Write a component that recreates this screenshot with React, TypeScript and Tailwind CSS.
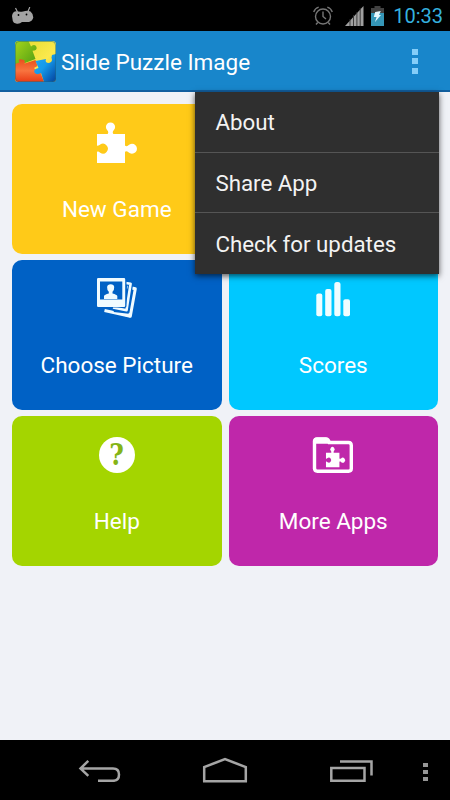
import type { ReactNode } from 'react';

interface TileProps {
  label: string;
  color: string;
  children: ReactNode;
}

const PUZZLE_PATH =
  'M1 12H11.6C12.6 11 12.4 9.600 11.300 8.300A4.600 4.600 0 1 1 17.700 8.300C16.600 9.600 16.400 11 17.400 12H29V23.600C30 24.500 31.300 24.200 32.400 23.200A5 5 0 1 1 32.400 30.200C31.300 29.200 30 28.900 29 29.800V41H1V30C2 29 3 30 4.200 30.800A4.900 4.900 0 1 0 4.200 22.600C3 23.400 2 24.400 1 23.400Z';

const PuzzleIcon = () => (
  <svg className="h-[42px] w-[42px]" viewBox="0 0 42 42" fill="#fff">
    <path d={PUZZLE_PATH} />
  </svg>
);

const PhotosIcon = () => (
  <svg className="h-[42px] w-[42px]" viewBox="0 0 42 42" fill="none">
    <path
      d="M31 9L39.300 10.800L34.300 38.300L8.500 32.500"
      stroke="#f0fbff"
      strokeWidth="3"
      strokeLinejoin="round"
    />
    <path d="M8 32L34.500 35L34.200 39.600Z" fill="#f0fbff" />
    <path d="M29.500 4.500L34.700 5.500L30.500 33L18 31.500" stroke="#0061c5" strokeWidth="5" />
    <path d="M29.500 5L34.600 5.700L30.500 32.200L17 29.500" stroke="#f0fbff" strokeWidth="2.600" strokeLinejoin="round" />
    <rect x=".300" y="-.500" width="30.200" height="30" rx="1.500" fill="#0061c5" />
    <path
      fillRule="evenodd"
      fill="#f0fbff"
      d="M2.200 0H28Q29.200 0 29.200 1.200V27.800Q29.200 29 28 29H2.200Q1 29 1 27.800V1.200Q1 0 2.200 0ZM4 3.500V21.500H26.300V3.500Z"
    />
    <path
      fill="#f0fbff"
      d="M8 21V18Q8.500 16.400 12.800 15.400V13.800Q10.900 11.800 11.100 9Q11.500 6.200 14.700 6.200Q17.900 6.200 18.200 9Q18.400 11.800 16.500 13.800V15.400Q20.800 16.400 21.300 18V21Z"
    />
  </svg>
);

const ScoresIcon = () => (
  <svg className="h-[42px] w-[42px]" viewBox="0 0 42 42" fill="#f0fdff">
    <rect x="4.300" y="15.500" width="6" height="22.800" rx="2" />
    <rect x="13.200" y="11" width="6.300" height="27.300" rx="2" />
    <rect x="22.300" y="4" width="6.200" height="34.300" rx="2.500" />
    <rect x="31.300" y="21.300" width="6.700" height="17" rx="2" />
  </svg>
);

const HelpIcon = () => (
  <div className="flex h-[42px] w-[42px] items-center justify-center">
    <div className="flex h-9 w-9 items-center justify-center rounded-full bg-white font-['DejaVu_Serif',serif] text-[29px] leading-9 font-bold text-[#84b416]">
      <span className="scale-x-[.860]">?</span>
    </div>
  </div>
);

const FolderIcon = () => (
  <svg className="h-[42px] w-[42px]" viewBox="0 0 42 42">
    <path
      d="M2.500 35V7Q2.500 5 5 5H14Q16.400 5 17.300 8.500H36.500Q39.300 8.500 39.300 11.500V34.500Q39.300 37.200 36.500 37.200H5.500Q2.500 37.200 2.500 34Z"
      fill="none"
      stroke="#fff"
      strokeWidth="3.400"
    />
    <path d="M2 4.500Q3 3.500 5 3.500H14Q17 4 17.500 9.700H2Z" fill="#fff" />
    <path d={PUZZLE_PATH} fill="#fff" transform="translate(13.500 12.800) scale(.480 .500)" />
  </svg>
);

const AppLogo = () => (
  <svg className="mt-px h-[41px] w-[41px]" viewBox="0 0 41 41">
    <defs>
      <linearGradient id="green" x1="0" y1="0" x2="1" y2="1">
        <stop stopColor="#a5d51b" />
        <stop offset="1" stopColor="#4b9b13" />
      </linearGradient>
      <linearGradient id="yellow" x1="0" y1="0" x2="1" y2="1">
        <stop stopColor="#e2da2c" />
        <stop offset=".600" stopColor="#fbe94e" />
        <stop offset="1" stopColor="#e9b60e" />
      </linearGradient>
      <linearGradient id="red" x1="0" y1="0" x2="0" y2="1">
        <stop stopColor="#e8501c" />
        <stop offset=".500" stopColor="#f8743f" />
        <stop offset="1" stopColor="#e93b14" />
      </linearGradient>
      <linearGradient id="blue" x1="0" y1="0" x2="1" y2="1">
        <stop stopColor="#24a5f2" />
        <stop offset=".450" stopColor="#149bec" />
        <stop offset="1" stopColor="#043f9b" />
      </linearGradient>
      <clipPath id="logo">
        <rect width="41" height="41" rx="3.500" />
      </clipPath>
    </defs>
    <g clipPath="url(#logo)">
      <rect width="41" height="41" fill="url(#yellow)" />
      <path
        d="M0 0H13.500L16 5.500Q20 2.500 21.500 6Q22.500 9.500 17.500 9.800L20.500 18L10 22L0 26Z"
        fill="url(#green)"
      />
      <path
        d="M0 23L4.500 21.500Q2.500 17.500 6.500 18.500Q11 18.500 9.500 22.500L20.500 19L22.500 25L19 27Q21 30 24.500 29L29 41H0Z"
        fill="url(#red)"
      />
      <path
        d="M20.500 20L31 18Q29.500 22 34 22Q38 21 36.500 16.500L37 14L41 13V41H29L26 32Q21.500 34.500 19.500 31.500Q18 28 23.500 27Z"
        fill="url(#blue)"
      />
      <rect x=".500" y=".500" width="40" height="40" rx="3.500" fill="none" stroke="#1c6b84" strokeOpacity=".500" />
    </g>
  </svg>
);

const Tile = ({ label, color, children }: TileProps) => (
  <div className={`flex flex-col items-center rounded-[10px] pt-[18px] text-white ${color}`}>
    {children}
    <p className="mt-8 text-[22.500px] leading-[26px]">{label}</p>
  </div>
);

const StatusBar = () => (
  <div className="flex h-[31px] items-center bg-black pr-[7px] pl-3">
    <svg className="h-[18px] w-[22px]" viewBox="0 0 22 18">
      <path d="M3.500 1L5.500 5M17.800 0L16 4.500" stroke="#a3a3a3" strokeWidth="1.200" />
      <path
        d="M0 9Q.500 4.500 4.500 4.300Q8 5 11 4.500Q15.500 3 18.500 4.500Q21.500 7 21.300 10.500Q20.500 14 17 15H10Q7.500 17.300 4 16.500Q1.500 16 .800 14Z"
        fill="#a3a3a3"
      />
      <circle cx="6.500" cy="8" r=".900" fill="#000" />
      <circle cx="14.500" cy="7.500" r=".900" fill="#000" />
    </svg>
    <div className="ml-auto flex items-center">
      <svg className="h-5 w-5" viewBox="0 0 20 20" fill="none" stroke="#767676" strokeWidth="1.400">
        <circle cx="10" cy="10.500" r="7.500" />
        <path d="M10 5.500V10.500L13 13M.700 6Q2 2.300 5.700 1.200M14.300 1.200Q18 2.300 19.300 6M4.700 16.500L3 18.500M15.300 16.500L17 18.500" />
      </svg>
      <svg className="ml-3 h-[22px] w-[19px]" viewBox="0 0 19 22">
        <path d="M0 21L18.500 1V21Z" fill="#a0a0a0" />
        <path d="M5 14V21M8.500 10V21M11.900 7V21M15.200 3V21" stroke="#333" strokeWidth=".900" />
      </svg>
      <svg className="ml-[7px] h-5 w-[13px]" viewBox="0 0 13 20">
        <path d="M3.500 0H9.500V2H13V8H0V2H3.500Z" fill="#424242" />
        <path d="M0 7H13V20H0Z" fill="#3596b7" />
        <path d="M4.200 6L9.800 5L8 9H10L4 16L5.600 11H2.800Z" fill="#e6f8ff" />
      </svg>
      <span className="ml-[9px] text-[20px] leading-6 text-[#35b1df]">10:33</span>
    </div>
  </div>
);

const ActionBar = () => (
  <header className="relative flex h-[61px] items-center border-b-2 border-[#125f9f] bg-[#1886cb] pl-[15px]">
    <AppLogo />
    <h1 className="mt-[3px] ml-[5px] text-[22.500px] leading-7 text-white">Slide Puzzle Image</h1>
    <div className="mt-px mr-8 ml-auto flex flex-col gap-[3.500px]">
      <span className="h-1.5 w-1.5 bg-[#84cdf8]" />
      <span className="h-1.5 w-1.5 bg-[#84cdf8]" />
      <span className="h-1.5 w-1.5 bg-[#84cdf8]" />
    </div>
    <ul className="absolute top-[61px] right-[10.600px] z-10 w-[244px] divide-y divide-[#555] bg-[#2f2f2f] text-[22.300px] text-[#f3f3f3] shadow-[0_2px_6px_rgba(0,0,0,0.65)]">
      {['About', 'Share App', 'Check for updates'].map((item) => (
        <li key={item} className="flex h-[60.700px] items-center pt-[2px] pl-5">
          {item}
        </li>
      ))}
    </ul>
  </header>
);

const NavBar = () => (
  <nav className="flex h-[60px] items-center bg-black pl-[78px]">
    <svg className="h-6 w-[44px]" viewBox="0 0 44 24" fill="none" stroke="#a5a5a5" strokeWidth="2.500">
      <path d="M2 10.500H35Q41 10.500 41 16.500Q41 22.800 35 22.800H20M10.300 2.800L2.500 10.500L10.300 17.900" />
    </svg>
    <svg className="ml-[80px] h-7 w-[46px]" viewBox="0 0 46 28" fill="none" stroke="#a5a5a5" strokeWidth="2.500">
      <path d="M2.200 25.200V11L23 3.200L43.800 11V25.200Z" />
    </svg>
    <svg className="ml-[81px] h-6 w-[45px]" viewBox="0 0 45 24" fill="none" stroke="#a5a5a5" strokeWidth="2.500">
      <path d="M2.300 10H35.500V22.700H2.300ZM11 3.600H42.500V17.500" />
    </svg>
    <div className="mt-[3px] ml-[49px] flex flex-col gap-[3px]">
      <span className="h-1 w-[5px] bg-[#969696]" />
      <span className="h-1 w-[5px] bg-[#969696]" />
      <span className="h-1 w-[5px] bg-[#969696]" />
    </div>
  </nav>
);

const App = () => {
  return (
    <div className="flex h-[800px] w-[450px] flex-col overflow-hidden bg-[#f0f2f7] font-[Roboto,sans-serif]">
      <StatusBar />
      <ActionBar />
      <main className="grow px-3 pt-3">
        <div className="grid auto-rows-[149.700px] grid-cols-2 gap-x-[7px] gap-y-[6.500px]">
          <Tile label="New Game" color="bg-[#ffca18]">
            <PuzzleIcon />
          </Tile>
          <div />
          <Tile label="Choose Picture" color="bg-[#0061c5]">
            <PhotosIcon />
          </Tile>
          <Tile label="Scores" color="bg-[#00c8ff]">
            <ScoresIcon />
          </Tile>
          <Tile label="Help" color="bg-[#a4d500]">
            <HelpIcon />
          </Tile>
          <Tile label="More Apps" color="bg-[#bf27aa]">
            <FolderIcon />
          </Tile>
        </div>
      </main>
      <NavBar />
    </div>
  );
};

export default App;
